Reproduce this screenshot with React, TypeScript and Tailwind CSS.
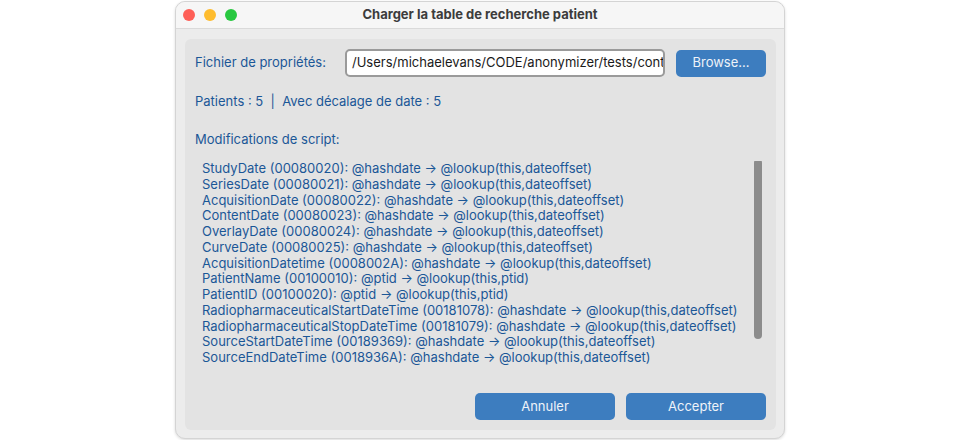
import React from "react";

const rows = [
  "StudyDate (00080020): @hashdate → @lookup(this,dateoffset)",
  "SeriesDate (00080021): @hashdate → @lookup(this,dateoffset)",
  "AcquisitionDate (00080022): @hashdate → @lookup(this,dateoffset)",
  "ContentDate (00080023): @hashdate → @lookup(this,dateoffset)",
  "OverlayDate (00080024): @hashdate → @lookup(this,dateoffset)",
  "CurveDate (00080025): @hashdate → @lookup(this,dateoffset)",
  "AcquisitionDatetime (0008002A): @hashdate → @lookup(this,dateoffset)",
  "PatientName (00100010): @ptid → @lookup(this,ptid)",
  "PatientID (00100020): @ptid → @lookup(this,ptid)",
  "RadiopharmaceuticalStartDateTime (00181078): @hashdate → @lookup(this,dateoffset)",
  "RadiopharmaceuticalStopDateTime (00181079): @hashdate → @lookup(this,dateoffset)",
  "SourceStartDateTime (00189369): @hashdate → @lookup(this,dateoffset)",
  "SourceEndDateTime (0018936A): @hashdate → @lookup(this,dateoffset)",
];

export default function App() {
  return (
    <div className="w-full h-[440px] bg-white pt-[1px] font-['Inter',sans-serif] text-[13px]">
      <div className="mx-auto w-[610px] h-[438px] rounded-[10px] border border-[#d4d4d4] bg-[#ececec] overflow-hidden shadow-[0_1px_3px_rgba(0,0,0,0.15)] flex flex-col">
        <div className="relative h-[27px] shrink-0 bg-[#f6f6f6] border-b border-[#dadada] flex items-center justify-center">
          <div className="absolute left-[7px] top-[7px] flex gap-[9px]">
            <span className="w-[12px] h-[12px] rounded-full bg-[#fe5f57]" />
            <span className="w-[12px] h-[12px] rounded-full bg-[#febc2e]" />
            <span className="w-[12px] h-[12px] rounded-full bg-[#28c840]" />
          </div>
          <span className="font-bold text-[#3c3c3c] text-[13px]">Charger la table de recherche patient</span>
        </div>

        <div className="flex-1 pt-[10px] pl-[9px] pr-[8px] pb-[8px]">
          <div className="h-full rounded-[6px] bg-[#e3e3e3] px-[10px] pt-[10px] pb-[10px] flex flex-col text-[#1b5797]">
            <div className="flex items-center h-[28px]">
              <span className="w-[150px]">Fichier de propriétés:</span>
              <div className="w-[320px] h-[28px] rounded-[5px] border-2 border-[#9a9a9a] bg-white flex items-center px-[5px] overflow-hidden whitespace-nowrap text-[#1a1a1a]">
                /Users/michaelevans/CODE/anonymizer/tests/controller
              </div>
              <button className="ml-auto w-[90px] h-[27px] rounded-[5px] bg-[#3d7dbf] text-[#eef3f9]">Browse...</button>
            </div>

            <div className="mt-[17px] h-[16px] flex items-center">Patients : 5 &nbsp;|&nbsp; Avec décalage de date : 5</div>

            <div className="mt-[22px] h-[16px] flex items-center">Modifications de script:</div>

            <div className="mt-[13px] flex h-[206px] overflow-hidden">
              <div className="flex-1 pl-[7px] leading-[15.75px] whitespace-nowrap">
                {rows.map((r) => (
                  <div key={r}>{r}</div>
                ))}
              </div>
              <div className="w-[8px] mr-[4px] -mt-[2px] h-[180px] rounded-full bg-[#8c8c8c]" />
            </div>

            <div className="mt-auto flex justify-end gap-[11px]">
              <button className="w-[140px] h-[27px] rounded-[5px] bg-[#3d7dbf] text-[#eef3f9]">Annuler</button>
              <button className="w-[140px] h-[27px] rounded-[5px] bg-[#3d7dbf] text-[#eef3f9]">Accepter</button>
            </div>
          </div>
        </div>
      </div>
    </div>
  );
}
